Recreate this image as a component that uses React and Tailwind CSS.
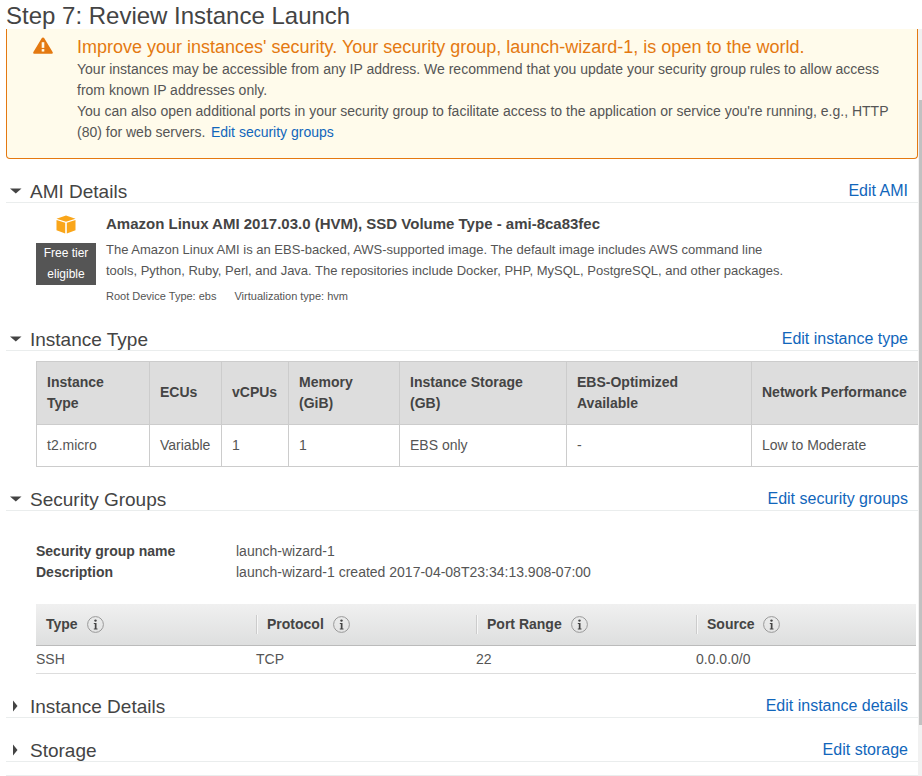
const sans = { fontFamily: '"Liberation Sans", Arial, sans-serif' }

function Caret({ open }) {
  return (
    <svg width="14" height="14" viewBox="0 0 14 14" className="shrink-0" fill="#444">
      {open ? <path d="M1 4.5h11.5L6.8 9.5z" /> : <path d="M4 1.5l4.5 5.5-4.5 5.5z" />}
    </svg>
  )
}

function SectionHead({ title, action, open, className }) {
  return (
    <div className={`flex items-end h-[26px] ml-[6px] border-b border-[#eaeded] ${className}`}>
      <div className="w-[24px] pl-[3px] self-start pt-[7px]"><Caret open={open} /></div>
      <h2 className="text-[19px] leading-[26px] text-[#444] flex-1 translate-y-[3px]">{title}</h2>
      <a className="text-[16px] leading-[26px] text-[#1166bb] mr-[14px] translate-y-[2px]">{action}</a>
    </div>
  )
}

function InfoIcon() {
  return (
    <svg width="17" height="17" viewBox="0 0 17 17" className="shrink-0">
      <circle cx="8.5" cy="8.5" r="7.9" fill="none" stroke="#999" />
      <circle cx="8.5" cy="4.6" r="1.2" fill="#444" />
      <path d="M6.8 7h2.7v5.6h1v1H6.8v-1h1V8h-1z" fill="#444" />
    </svg>
  )
}

const instanceCols = [
  { w: 'w-[113px]', head: ['Instance', 'Type'], val: 't2.micro' },
  { w: 'w-[72px]', head: ['ECUs'], val: 'Variable' },
  { w: 'w-[67px]', head: ['vCPUs'], val: '1' },
  { w: 'w-[111px]', head: ['Memory', '(GiB)'], val: '1' },
  { w: 'w-[167px]', head: ['Instance Storage', '(GB)'], val: 'EBS only' },
  { w: 'w-[185px]', head: ['EBS-Optimized', 'Available'], val: '-' },
  { w: 'w-[167px]', head: ['Network Performance'], val: 'Low to Moderate' },
]

const sgCols = [
  { w: 'w-[220px]', head: 'Type', val: 'SSH' },
  { w: 'w-[220px]', head: 'Protocol', val: 'TCP' },
  { w: 'w-[220px]', head: 'Port Range', val: '22' },
  { w: 'w-[220px]', head: 'Source', val: '0.0.0.0/0' },
]

export default function App() {
  return (
    <div style={sans} className="relative w-[922px] h-[776px] overflow-hidden bg-white text-[14px] text-[#555]">
      <h1 className="h-[29px] pl-[6px] text-[24px] leading-[32px] text-[#444]">Step 7: Review Instance Launch</h1>

      {/* warning */}
      <div className="mx-[6px] w-[912px] h-[130px] flex bg-[#fffbeb] border-x border-b border-[#e47911] rounded-b-[4px]">
        <div className="w-[70px] pl-[26px] pt-[8px] shrink-0">
          <svg width="20" height="17" viewBox="0 0 20 18" preserveAspectRatio="none">
            <path d="M10 0.5c.6 0 1 .3 1.3.8l8.3 14.6c.5.9 0 1.8-1 1.8H1.4c-1 0-1.5-.9-1-1.8L8.7 1.3c.3-.5.7-.8 1.3-.8z" fill="#e47911" />
            <rect x="8.7" y="5.5" width="2.6" height="6" fill="#fffbeb" />
            <rect x="8.7" y="12.8" width="2.6" height="2.6" fill="#fffbeb" />
          </svg>
        </div>
        <div className="pt-[6px] w-[820px]">
          <div className="text-[18px] leading-[24px] text-[#e47911]">Improve your instances' security. Your security group, launch-wizard-1, is open to the world.</div>
          <p className="leading-[21px]">Your instances may be accessible from any IP address. We recommend that you update your security group rules to allow access<br />from known IP addresses only.</p>
          <p className="leading-[21px]">You can also open additional ports in your security group to facilitate access to the application or service you're running, e.g., HTTP<br />(80) for web servers.<a className="ml-[5.5px] text-[#1166bb]">Edit security groups</a></p>
        </div>
      </div>

      <SectionHead open title="AMI Details" action="Edit AMI" className="mt-[18px]" />

      {/* ami */}
      <div className="flex h-[122px] pl-[36px]">
        <div className="w-[60px] shrink-0 pt-[12px] flex flex-col items-center">
          <svg width="20" height="19" viewBox="0 0 20 19">
            <path d="M10 0.5L19.5 3.8 10 6.8 0.5 3.8z" fill="#faa61a" />
            <path d="M0.5 5L9.2 7.8V18.5L0.5 15.2z" fill="#faa61a" />
            <path d="M19.5 5L10.8 7.8V18.5L19.5 15.2z" fill="#faa61a" />
          </svg>
          <div className="mt-[9px] w-[60px] h-[42px] bg-[#555] text-white text-[12px] leading-[21px] text-center">Free tier<br />eligible</div>
        </div>
        <div className="pl-[10px] pt-[11px]">
          <div className="text-[15px] leading-[20px] font-bold text-[#444]">Amazon Linux AMI 2017.03.0 (HVM), SSD Volume Type - ami-8ca83fec</div>
          <p className="mt-[5px] text-[13px] leading-[21px] w-[700px]">The Amazon Linux AMI is an EBS-backed, AWS-supported image. The default image includes AWS command line<br />tools, Python, Ruby, Perl, and Java. The repositories include Docker, PHP, MySQL, PostgreSQL, and other packages.</p>
          <div className="mt-[7px] text-[11px] leading-[16px] flex gap-[18px]"><span>Root Device Type: ebs</span><span>Virtualization type: hvm</span></div>
        </div>
      </div>

      <SectionHead open title="Instance Type" action="Edit instance type" />

      {/* instance table */}
      <div className="ml-[36px] mt-[10px] w-[882px] flex border-t border-l border-[#ccc]">
        {instanceCols.map(c => (
          <div key={c.val + c.head[0]} className={`${c.w} shrink-0 border-r border-[#ccc]`}>
            <div className="h-[63px] bg-[#dddddd] border-b border-[#ccc] px-[10px] pb-[1px] flex flex-col justify-center font-bold leading-[21px] text-[#444]">
              {c.head.map(h => <div key={h}>{h}</div>)}
            </div>
            <div className="h-[42px] px-[10px] border-b border-[#ccc] leading-[41px]">{c.val}</div>
          </div>
        ))}
      </div>

      <SectionHead open title="Security Groups" action="Edit security groups" className="mt-[18px]" />

      {/* security group */}
      <div className="ml-[36px] mt-[30px] leading-[21px]">
        <div className="flex"><b className="w-[200px] text-[#444]">Security group name</b><span>launch-wizard-1</span></div>
        <div className="flex"><b className="w-[200px] text-[#444]">Description</b><span>launch-wizard-1 created 2017-04-08T23:34:13.908-07:00</span></div>
      </div>

      <div className="ml-[36px] mt-[21px] w-[880px]">
        <div className="flex h-[42px] bg-gradient-to-b from-[#f0f0f0] to-[#dedfdf] border-b border-[#bbb]">
          {sgCols.map((c, i) => (
            <div key={c.head} className={`${c.w} flex items-center pl-[10px] gap-[9px] relative`}>
              {i > 0 && <span className="absolute left-0 top-[11px] h-[19px] w-[2px] border-l border-r border-l-[#ccc] border-r-[#f7f7f7]" />}
              <b className={`text-[#444] ${i > 0 ? 'ml-[1px]' : ''}`}>{c.head}</b>
              <InfoIcon />
            </div>
          ))}
        </div>
        <div className="flex h-[28px] border-b border-[#ddd] leading-[27px]">
          {sgCols.map(c => <div key={c.val} className={c.w}>{c.val}</div>)}
        </div>
      </div>

      <SectionHead title="Instance Details" action="Edit instance details" className="mt-[18px]" />
      <SectionHead title="Storage" action="Edit storage" className="mt-[18px]" />
      <div className="ml-[6px] mt-[13px] border-b border-[#eaeded]" />

      {/* scrollbar */}
      <div className="absolute right-0 top-[29px] bottom-0 w-[4px] bg-[#f1f1f1]" />
      <div className="absolute right-0 top-[100px] h-[625px] w-[3px] bg-[#c1c1c1]" />
    </div>
  )
}
